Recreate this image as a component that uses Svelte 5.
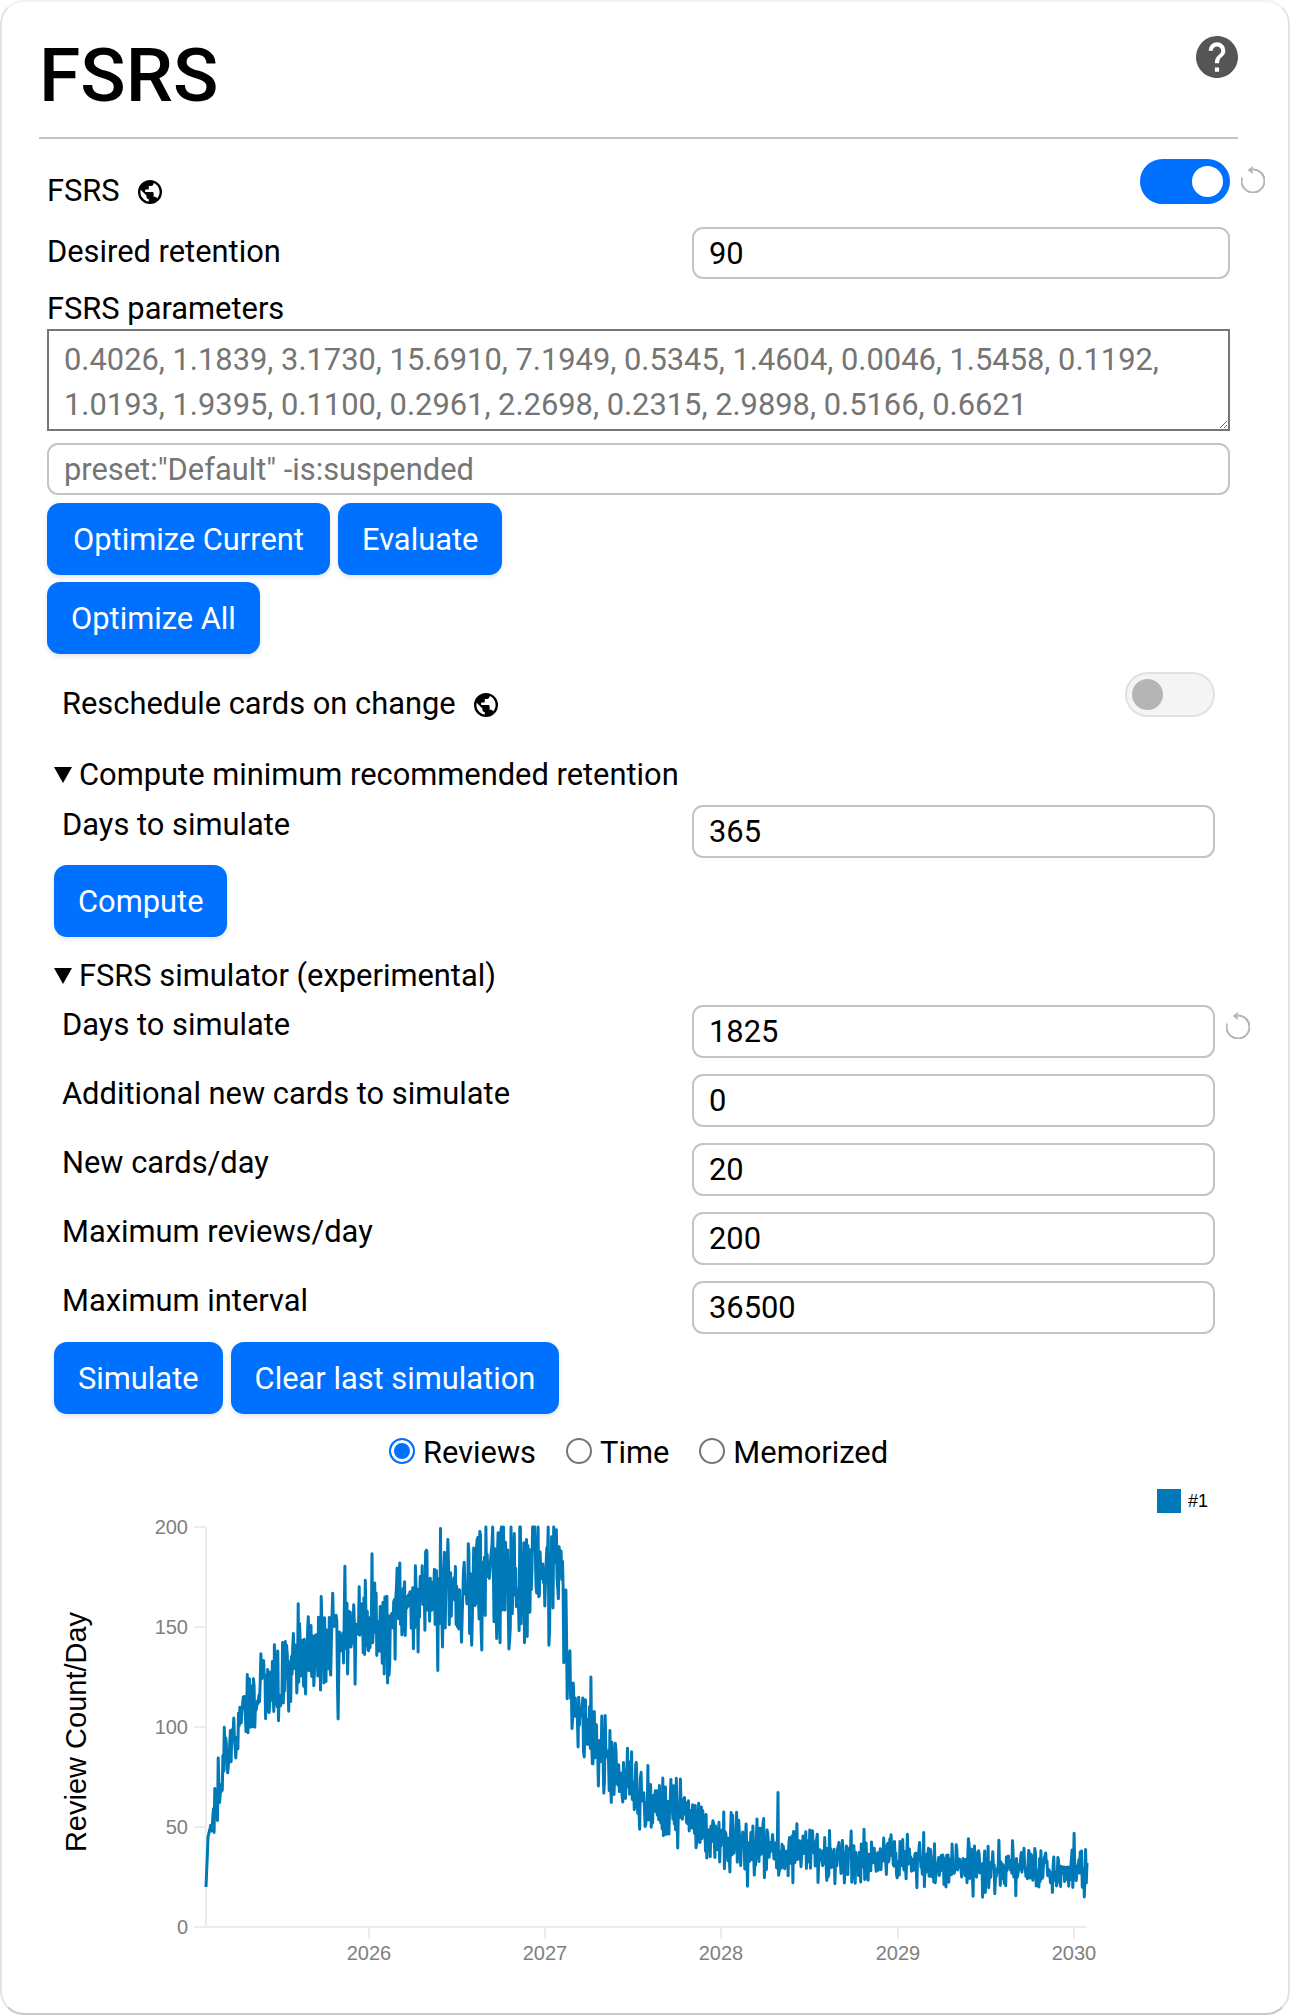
<script>
  const params =
    '0.4026, 1.1839, 3.1730, 15.6910, 7.1949, 0.5345, 1.4604, 0.0046, 1.5458, 0.1192, 1.0193, 1.9395, 0.1100, 0.2961, 2.2698, 0.2315, 2.9898, 0.5166, 0.6621';

  const simRows = [
    { label: 'Days to simulate', value: '1825', reset: true },
    { label: 'Additional new cards to simulate', value: '0' },
    { label: 'New cards/day', value: '20' },
    { label: 'Maximum reviews/day', value: '200' },
    { label: 'Maximum interval', value: '36500' }
  ];

  const modes = ['Reviews', 'Time', 'Memorized'];
  let mode = 'Reviews';

  // simulated review counts: [x px, mean reviews]
  const curve = [
    [206, 20], [208, 45], [215, 60], [225, 82], [247, 113], [300, 133], [370, 152],
    [430, 165], [500, 177], [562, 182], [568, 128], [575, 108], [600, 90], [640, 66],
    [680, 57], [720, 45], [780, 38], [850, 34], [920, 32], [1000, 29], [1050, 27], [1087, 27]
  ];

  function meanAt(x) {
    for (let i = 1; i < curve.length; i++) {
      if (x <= curve[i][0]) {
        const [x0, y0] = curve[i - 1];
        const [x1, y1] = curve[i];
        return y0 + ((y1 - y0) * (x - x0)) / (x1 - x0);
      }
    }
    return 27;
  }

  function buildLine() {
    let seed = 20250214;
    const rnd = () => {
      seed = (seed * 1664525 + 1013904223) % 4294967296;
      return seed / 4294967296;
    };
    const pts = [];
    const steps = 1300;
    for (let i = 0; i <= steps; i++) {
      const x = 206 + (i / steps) * 881;
      const mean = meanAt(x);
      const spread = x > 477 && x < 563 ? 1.25 : 1.05;
      const gauss = (rnd() + rnd() + rnd() + rnd() - 2) * 1.73;
      let v = mean + gauss * Math.sqrt(mean) * spread;
      if (rnd() < 0.03) v += (rnd() - 0.5) * Math.sqrt(mean) * 6;
      if (i < 8) v = mean;
      if (i === steps) v = 32;
      if (i === steps - 1) v = 22;
      if (i === steps - 4) v = 15;
      v = Math.max(0, Math.min(200, v));
      pts.push(x.toFixed(1) + ' ' + (1926 - v * 2).toFixed(1));
    }
    return 'M' + pts.join('L');
  }

  const line = buildLine();
  const yTicks = [0, 50, 100, 150, 200];
  const xTicks = [
    { x: 369, label: '2026' },
    { x: 545, label: '2027' },
    { x: 721, label: '2028' },
    { x: 898, label: '2029' },
    { x: 1074, label: '2030' }
  ];
</script>

{#snippet earth()}
  <svg class="earth" viewBox="2 2 20 20" aria-hidden="true">
    <path d="M17.9,17.39C17.64,16.59 16.89,16 16,16H15V13A1,1 0 0,0 14,12H8V10H10A1,1 0 0,0 11,9V7H13A2,2 0 0,0 15,5V4.59C17.93,5.77 20,8.64 20,12C20,14.08 19.2,15.97 17.9,17.39M11,19.93C7.05,19.44 4,16.08 4,12C4,11.38 4.08,10.78 4.21,10.21L9,15V16A2,2 0 0,0 11,18M12,2A10,10 0 0,0 2,12A10,10 0 0,0 12,22A10,10 0 0,0 22,12A10,10 0 0,0 12,2Z" />
  </svg>
{/snippet}

{#snippet reset()}
  <svg class="reset" viewBox="0 0 24 28" aria-hidden="true">
    <path class="reset__arc" d="M12 4.5A11.5 11.5 0 1 1 1 12.6" />
    <path class="reset__head" d="M6.7 5L11.7 1V9Z" />
  </svg>
{/snippet}

<main class="card">
  <header class="head">
    <h1>FSRS</h1>
    <svg class="help" viewBox="2 2 20 20" aria-hidden="true">
      <path d="M15.07,11.25L14.17,12.17C13.45,12.89 13,13.5 13,15H11V14.5C11,13.39 11.45,12.39 12.17,11.67L13.41,10.41C13.78,10.05 14,9.55 14,9C14,7.89 13.1,7 12,7A2,2 0 0,0 10,9H8A4,4 0 0,1 12,5A4,4 0 0,1 16,9C16,9.88 15.64,10.67 15.07,11.25M13,19H11V17H13M12,2A10,10 0 0,0 2,12C2,17.53 6.47,22 12,22C17.53,22 22,17.53 22,12C22,6.47 17.5,2 12,2Z" />
    </svg>
  </header>

  <section class="content">
    <div class="toggle-row">
      <span class="toggle-row__label">FSRS {@render earth()}</span>
      <input class="toggle" type="checkbox" checked />
      {@render reset()}
    </div>

    <div class="field field--first">
      <span class="field__label">Desired retention</span>
      <input class="text" type="text" value="90" />
    </div>

    <div class="stack-label">FSRS parameters</div>
    <textarea class="params" placeholder={params}></textarea>
    <input class="text search" type="text" placeholder={'preset:"Default" -is:suspended'} />

    <div class="buttons buttons--top">
      <button type="button" class="wide">Optimize Current</button>
      <button type="button">Evaluate</button>
    </div>
    <div class="buttons buttons--second">
      <button type="button">Optimize All</button>
    </div>

    <div class="inner">
      <div class="toggle-row toggle-row--inner">
        <span class="toggle-row__label">Reschedule cards on change {@render earth()}</span>
        <input class="toggle" type="checkbox" />
      </div>

      <details class="section section--compute" open>
        <summary>Compute minimum recommended retention</summary>
        <div class="field">
          <span class="field__label">Days to simulate</span>
          <input class="text" type="text" value="365" />
        </div>
        <div class="buttons buttons--after">
          <button type="button">Compute</button>
        </div>
      </details>

      <details class="section section--sim" open>
        <summary>FSRS simulator (experimental)</summary>
        {#each simRows as row}
          <div class="field field--sim">
            <span class="field__label">{row.label}</span>
            <input class="text" type="text" value={row.value} />
            {#if row.reset}{@render reset()}{/if}
          </div>
        {/each}
        <div class="buttons buttons--after">
          <button type="button">Simulate</button>
          <button type="button">Clear last simulation</button>
        </div>

        <div class="radios">
          {#each modes as m}
            <label class="radio">
              <input type="radio" name="mode" value={m} bind:group={mode} />
              {m}
            </label>
          {/each}
        </div>

        <svg class="chart" viewBox="54 1470 1200 530" role="img" aria-label="Review count per day">
          <text class="chart__title" transform="translate(86 1731) rotate(-90)">Review Count/Day</text>

          <path class="chart__axis" d="M194 1526H206V1926H1087" />
          {#each yTicks as t}
            <path class="chart__axis" d="M194 {1926 - t * 2}H206" />
            <text class="chart__tick" x="188" y={1926 - t * 2 + 7} text-anchor="end">{t}</text>
          {/each}
          {#each xTicks as t}
            <path class="chart__axis" d="M{t.x} 1926V1938" />
            <text class="chart__tick" x={t.x} y="1959" text-anchor="middle">{t.label}</text>
          {/each}

          <path class="chart__line" d={line} />

          <rect class="chart__swatch" x="1157" y="1488" width="24" height="24" />
          <text class="chart__legend" x="1188" y="1506">#1</text>
        </svg>
      </details>
    </div>
  </section>
</main>

<style>
  :global(body) {
    background: #fff;
  }

  .card {
    box-sizing: border-box;
    height: 2015px;
    padding-left: 37px;
    background: #fff;
    border: 2px solid #e4e4e4;
    border-top-color: #f2f2f2;
    border-bottom-color: #c9c9c9;
    border-radius: 24px;
    color: #000;
    font-family: Roboto, 'Liberation Sans', sans-serif;
    font-size: 30.85px;
    overflow: hidden;
  }

  .head {
    display: flex;
    justify-content: space-between;
    width: 1199px;
    height: 135px;
    border-bottom: 2px solid #c4c4c4;
  }

  h1 {
    margin: 0;
    padding-top: 28px;
    font-size: 75px;
    font-weight: 500;
    line-height: 90px;
  }

  .help {
    width: 42px;
    height: 42px;
    margin-top: 34px;
    fill: #555;
  }

  .content {
    width: 1183px;
    margin-left: 8px;
  }

  .toggle-row {
    display: flex;
    align-items: flex-start;
    height: 45px;
    margin-top: 20px;
  }

  .toggle-row__label {
    flex: 1;
    display: flex;
    align-items: center;
    gap: 18px;
    margin-top: 9px;
    line-height: 45px;
  }

  .toggle-row--inner {
    margin-top: 18px;
  }

  .toggle-row--inner .toggle-row__label {
    padding-left: 8px;
  }

  .earth {
    width: 24px;
    height: 24px;
    margin-top: 2px;
    fill: #000;
  }

  .reset {
    flex: none;
    width: 24px;
    height: 28px;
    margin: 6px -35px 0 11px;
  }

  .reset__arc {
    fill: none;
    stroke: #b4b4b4;
    stroke-width: 2;
  }

  .reset__head {
    fill: #b4b4b4;
  }

  .toggle {
    appearance: none;
    position: relative;
    box-sizing: border-box;
    flex: none;
    width: 90px;
    height: 45px;
    margin: 0;
    background: #f4f4f4;
    border: 2px solid #dee2e6;
    border-radius: 23px;
  }

  .toggle::after {
    content: '';
    position: absolute;
    top: 5px;
    left: 5px;
    width: 31px;
    height: 31px;
    border-radius: 50%;
    background: #b5b5b5;
  }

  .toggle:checked {
    background: #0070ff;
    border-color: #0070ff;
  }

  .toggle:checked::after {
    left: 50px;
    background: #fff;
  }

  .field {
    display: grid;
    grid-template-columns: 645px 1fr;
    margin-top: 11px;
    position: relative;
  }

  .field--first {
    margin-top: 23px;
  }

  .section--compute .field {
    margin-top: 12px;
  }

  .inner .field {
    grid-template-columns: 638px 1fr;
  }

  .inner .field__label {
    padding-left: 8px;
  }

  .field__label {
    padding-top: 2px;
    line-height: 36px;
  }

  .field--first .field__label {
    padding-top: 7px;
  }

  .field--sim + .field--sim {
    margin-top: 16px;
  }

  .field .reset {
    position: absolute;
    top: 6px;
    right: -35px;
    margin: 0;
  }

  .text {
    box-sizing: border-box;
    width: 100%;
    height: 53px;
    margin: 0;
    padding: 0 15px;
    background: #fff;
    border: 2px solid #c4c4c4;
    border-radius: 11px;
    color: #000;
    font: inherit;
    outline: none;
  }

  .field--first .text {
    height: 52px;
  }

  .text::placeholder,
  .params::placeholder {
    color: #757575;
    opacity: 1;
  }

  .stack-label {
    margin-top: 12px;
    line-height: 36px;
  }

  .params {
    display: block;
    box-sizing: border-box;
    width: 100%;
    height: 102px;
    margin: 2px 0 0;
    padding: 6px 15px;
    background: #fff;
    border: 2px solid #767676;
    border-radius: 0;
    font: inherit;
    line-height: 45px;
    outline: none;
    overflow: hidden;
  }

  .search {
    display: block;
    height: 52px;
    margin-top: 12px;
  }

  .buttons {
    display: flex;
    gap: 8px;
  }

  .buttons--top {
    margin-top: 8px;
  }

  .buttons--second {
    margin-top: 7px;
  }

  .buttons--after {
    margin-top: 8px;
  }

  .section--compute .buttons--after {
    margin-top: 7px;
  }

  button {
    height: 72px;
    padding: 0 24px;
    background: #0070ff;
    border: none;
    border-radius: 13px;
    box-shadow: 0 2px 5px rgba(0, 0, 0, 0.12);
    color: #fff;
    font: inherit;
  }

  .wide {
    min-width: 283px;
  }

  .inner {
    width: 1161px;
    margin-left: 7px;
  }

  .section--compute {
    margin-top: 40px;
  }

  .section--sim {
    margin-top: 21px;
  }

  summary {
    display: flex;
    align-items: center;
    gap: 7px;
    line-height: 36px;
    list-style: none;
  }

  summary::before {
    content: '';
    width: 0;
    height: 0;
    border-top: 16px solid #000;
    border-left: 9.5px solid transparent;
    border-right: 9.5px solid transparent;
  }

  .radios {
    display: flex;
    justify-content: center;
    gap: 30px;
    height: 36px;
    margin-top: 21px;
    padding-left: 8px;
  }

  .radio {
    display: flex;
    align-items: center;
    gap: 8px;
    line-height: 36px;
  }

  .radio input {
    appearance: none;
    box-sizing: border-box;
    width: 26px;
    height: 26px;
    margin: -4px 0 0;
    background: #fff;
    border: 2px solid #767676;
    border-radius: 50%;
  }

  .radio input:checked {
    background: #0070ff;
    border-color: #0070ff;
    box-shadow: inset 0 0 0 3px #fff;
  }

  .chart {
    display: block;
    width: 1200px;
    height: 530px;
  }

  .chart text {
    font-family: 'Liberation Sans', Arial, sans-serif;
  }

  .chart__title {
    font-size: 29px;
    text-anchor: middle;
    fill: #000;
  }

  .chart__axis {
    fill: none;
    stroke: #ececec;
    stroke-width: 2;
  }

  .chart__tick {
    font-size: 20px;
    fill: #808080;
  }

  .chart__line {
    fill: none;
    stroke: #0079b8;
    stroke-width: 3;
    stroke-linejoin: round;
  }

  .chart__swatch {
    fill: #0079b8;
  }

  .chart__legend {
    font-size: 18px;
    fill: #000;
  }
</style>
